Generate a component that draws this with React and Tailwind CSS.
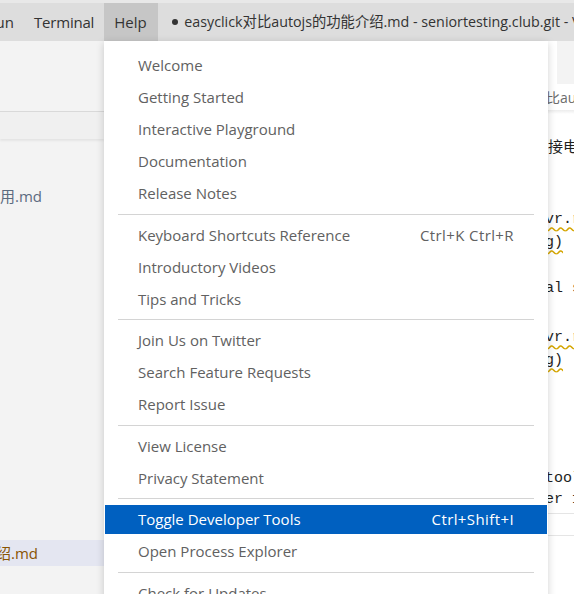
const sans = "font-['Open_Sans','Noto_Sans_CJK_SC',sans-serif]";

const groups = [
  [
    { label: 'Welcome' },
    { label: 'Getting Started' },
    { label: 'Interactive Playground' },
    { label: 'Documentation' },
    { label: 'Release Notes' },
  ],
  [
    { label: 'Keyboard Shortcuts Reference', keys: 'Ctrl+K Ctrl+R' },
    { label: 'Introductory Videos' },
    { label: 'Tips and Tricks' },
  ],
  [
    { label: 'Join Us on Twitter' },
    { label: 'Search Feature Requests' },
    { label: 'Report Issue' },
  ],
  [{ label: 'View License' }, { label: 'Privacy Statement' }],
  [
    { label: 'Toggle Developer Tools', keys: 'Ctrl+Shift+I', active: true },
    { label: 'Open Process Explorer' },
  ],
  [{ label: 'Check for Updates...' }],
];

function MenuItem({ label, keys, active }) {
  return (
    <div className="h-[32px] py-[1.5px]">
      <div
        className={`mx-[1px] flex h-[29px] items-center justify-between pl-[33px] pr-[33px] text-[15px] ${
          active ? 'bg-[#0060c0] text-white' : 'text-[#616161]'
        }`}
      >
        <span>{label}</span>
        {keys && <span className="tracking-[0.4px]">{keys}</span>}
      </div>
    </div>
  );
}

function HelpMenu() {
  return (
    <div className="absolute left-[104px] top-[41px] w-[444px] bg-white pt-[8.5px] shadow-[0_2px_8px_rgba(0,0,0,0.18)]">
      {groups.map((group, i) => (
        <div key={i}>
          {i > 0 && (
            <div className="flex h-[9.5px] items-center px-[14px]">
              <div className="h-px w-full bg-[#d4d4d4]" />
            </div>
          )}
          {group.map((item) => (
            <MenuItem key={item.label} {...item} />
          ))}
        </div>
      ))}
    </div>
  );
}

// text that is cut off by the left edge of the window
function Clipped({ width, children, className = '' }) {
  return (
    <div className={`flex shrink-0 justify-end overflow-hidden whitespace-nowrap ${className}`} style={{ width }}>
      {children}
    </div>
  );
}

function TitleBar() {
  return (
    <header className="shrink-0 overflow-hidden border-t-[3px] border-[#e8e8e8] bg-[#dddddd] text-[15px] text-[#333333]">
      <div className="flex h-[38px] items-center">
        <Clipped width={24} className="h-full items-center pr-[10px]">
          <span>Run</span>
        </Clipped>
        <div className="flex h-full shrink-0 items-center px-[10px] tracking-[-0.2px]">Terminal</div>
        <div className="flex h-full w-[54px] shrink-0 items-center bg-[#c6c6c6] px-[10px]">Help</div>
        <div className="ml-[14px] flex shrink-0 items-center gap-[6px] whitespace-nowrap text-[14.3px]">
          <span className="h-[6px] w-[6px] rounded-full bg-[#333333]" />
          <span>easyclick对比autojs的功能介绍.md - seniortesting.club.git - Visual Studio Code</span>
        </div>
      </div>
    </header>
  );
}

function Sidebar() {
  return (
    <aside className="flex w-[104px] shrink-0 flex-col bg-[#f3f3f3] text-[15px]">
      <div className="h-[71px] border-b border-[#d9d9d9]" />
      <div className="h-[27px] bg-[#f0f0f0] shadow-[0_2px_2px_rgba(0,0,0,0.06)]" />
      <div className="mt-[44px] flex h-[26px] items-center">
        <Clipped width={42}>
          <span className="text-[#5c6b80]">使用.md</span>
        </Clipped>
      </div>
      <div className="mt-[331px] flex h-[26px] items-center bg-[#e4e6f1]">
        <Clipped width={38}>
          <span className="text-[#895503]">介绍.md</span>
        </Clipped>
      </div>
    </aside>
  );
}

function CodeLine({ mt, h = 23, children, className = '' }) {
  return (
    <div
      className={`whitespace-nowrap pl-[441px] font-['Liberation_Mono',monospace] text-[15px] text-[#1f1f1f] ${className}`}
      style={{ marginTop: mt, height: h, lineHeight: `${h}px` }}
    >
      {children}
    </div>
  );
}

function Editor() {
  return (
    <section className="flex min-w-0 flex-1 flex-col overflow-hidden bg-white">
      <div className="flex h-[43px] shrink-0">
        <div className="w-[453px] bg-white" />
        <div className="flex-1 bg-[#f3f3f3]" />
      </div>
      <div className="flex h-[26px] shrink-0 items-center whitespace-nowrap pl-[442px] text-[14px] text-[#6c6c6c]">
        比autojs的功能介绍.md
      </div>
      <div className="h-[4px] shrink-0 bg-gradient-to-b from-[#ececec] to-white" />
      <div className="flex flex-col">
        <div className="whitespace-nowrap pl-[444px] text-[15px] leading-[23px] text-[#1f1f1f]" style={{ marginTop: 21, height: 23 }}>
          接电脑运行
        </div>
        <CodeLine mt={50}>
          <span className="underline decoration-[#d4a500] decoration-wavy underline-offset-[3px]">vr.run</span>
        </CodeLine>
        <CodeLine mt={0}>
          <span className="underline decoration-[#d4a500] decoration-wavy underline-offset-[3px]">g)</span>
        </CodeLine>
        <CodeLine mt={23}>al script</CodeLine>
        <CodeLine mt={26}>
          <span className="underline decoration-[#d4a500] decoration-wavy underline-offset-[3px]">vr.run</span>
        </CodeLine>
        <CodeLine mt={0}>
          <span className="underline decoration-[#d4a500] decoration-wavy underline-offset-[3px]">g)</span>
        </CodeLine>
        <CodeLine mt={96} h={21}>tools</CodeLine>
        <CodeLine mt={0} h={21}>er 1</CodeLine>
        <div className="mt-[3px] h-px bg-[#e5e5e5]" />
        <div className="h-[21px]" />
        <div className="h-px bg-[#e5e5e5]" />
      </div>
    </section>
  );
}

export default function App() {
  return (
    <div className={`relative flex h-[594px] w-[574px] flex-col overflow-hidden bg-white ${sans}`}>
      <TitleBar />
      <main className="flex min-h-0 flex-1">
        <Sidebar />
        <Editor />
      </main>
      <HelpMenu />
    </div>
  );
}
